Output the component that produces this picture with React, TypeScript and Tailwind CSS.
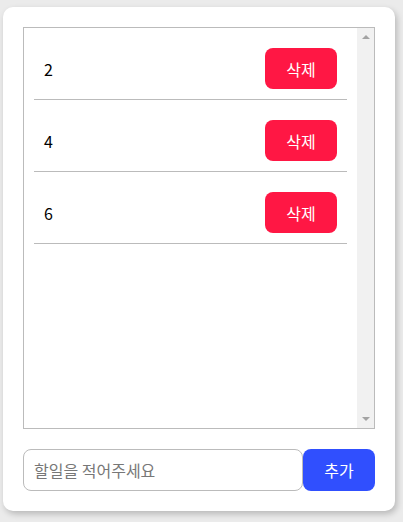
export default function App() {
  const todos = ["2", "4", "6"];

  return (
    <div
      className="min-h-[522px] bg-[#ebebeb] pl-[3px] pt-[7px]"
      style={{ fontFamily: '"Noto Sans CJK KR", "Noto Sans", sans-serif' }}
    >
      <div className="w-[392px] rounded-[10px] bg-white p-5 shadow-[2px_3px_6px_rgba(0,0,0,0.22)]">
        <div className="flex h-[402px] border border-[#bbb]">
          <ul className="flex-1 overflow-hidden px-[10px]">
            {todos.map((t) => (
              <li
                key={t}
                className="mt-[10px] flex items-center justify-between border-b border-[#bbb] px-[10px] py-[10px]"
              >
                <span className="text-[16px] text-black">{t}</span>
                <button className="h-[41px] w-[72px] rounded-lg bg-[#ff1744] text-[16px] text-white">
                  삭제
                </button>
              </li>
            ))}
          </ul>
          {/* scrollbar track */}
          <div className="flex w-[17px] flex-col items-center justify-between bg-[#f1f1f1] py-[7px]">
            <div className="h-0 w-0 border-x-[4px] border-b-[4px] border-x-transparent border-b-[#a3a3a3]" />
            <div className="h-0 w-0 border-x-[4px] border-t-[4px] border-x-transparent border-t-[#a3a3a3]" />
          </div>
        </div>

        <div className="mt-5 flex">
          <input
            className="h-[42px] flex-1 rounded-lg border border-[#bbb] px-[10px] text-[16px] outline-none placeholder:text-[#777]"
            placeholder="할일을 적어주세요"
          />
          <button className="h-[42px] w-[72px] rounded-lg bg-[#304ffe] text-[16px] text-white">
            추가
          </button>
        </div>
      </div>
    </div>
  );
}
